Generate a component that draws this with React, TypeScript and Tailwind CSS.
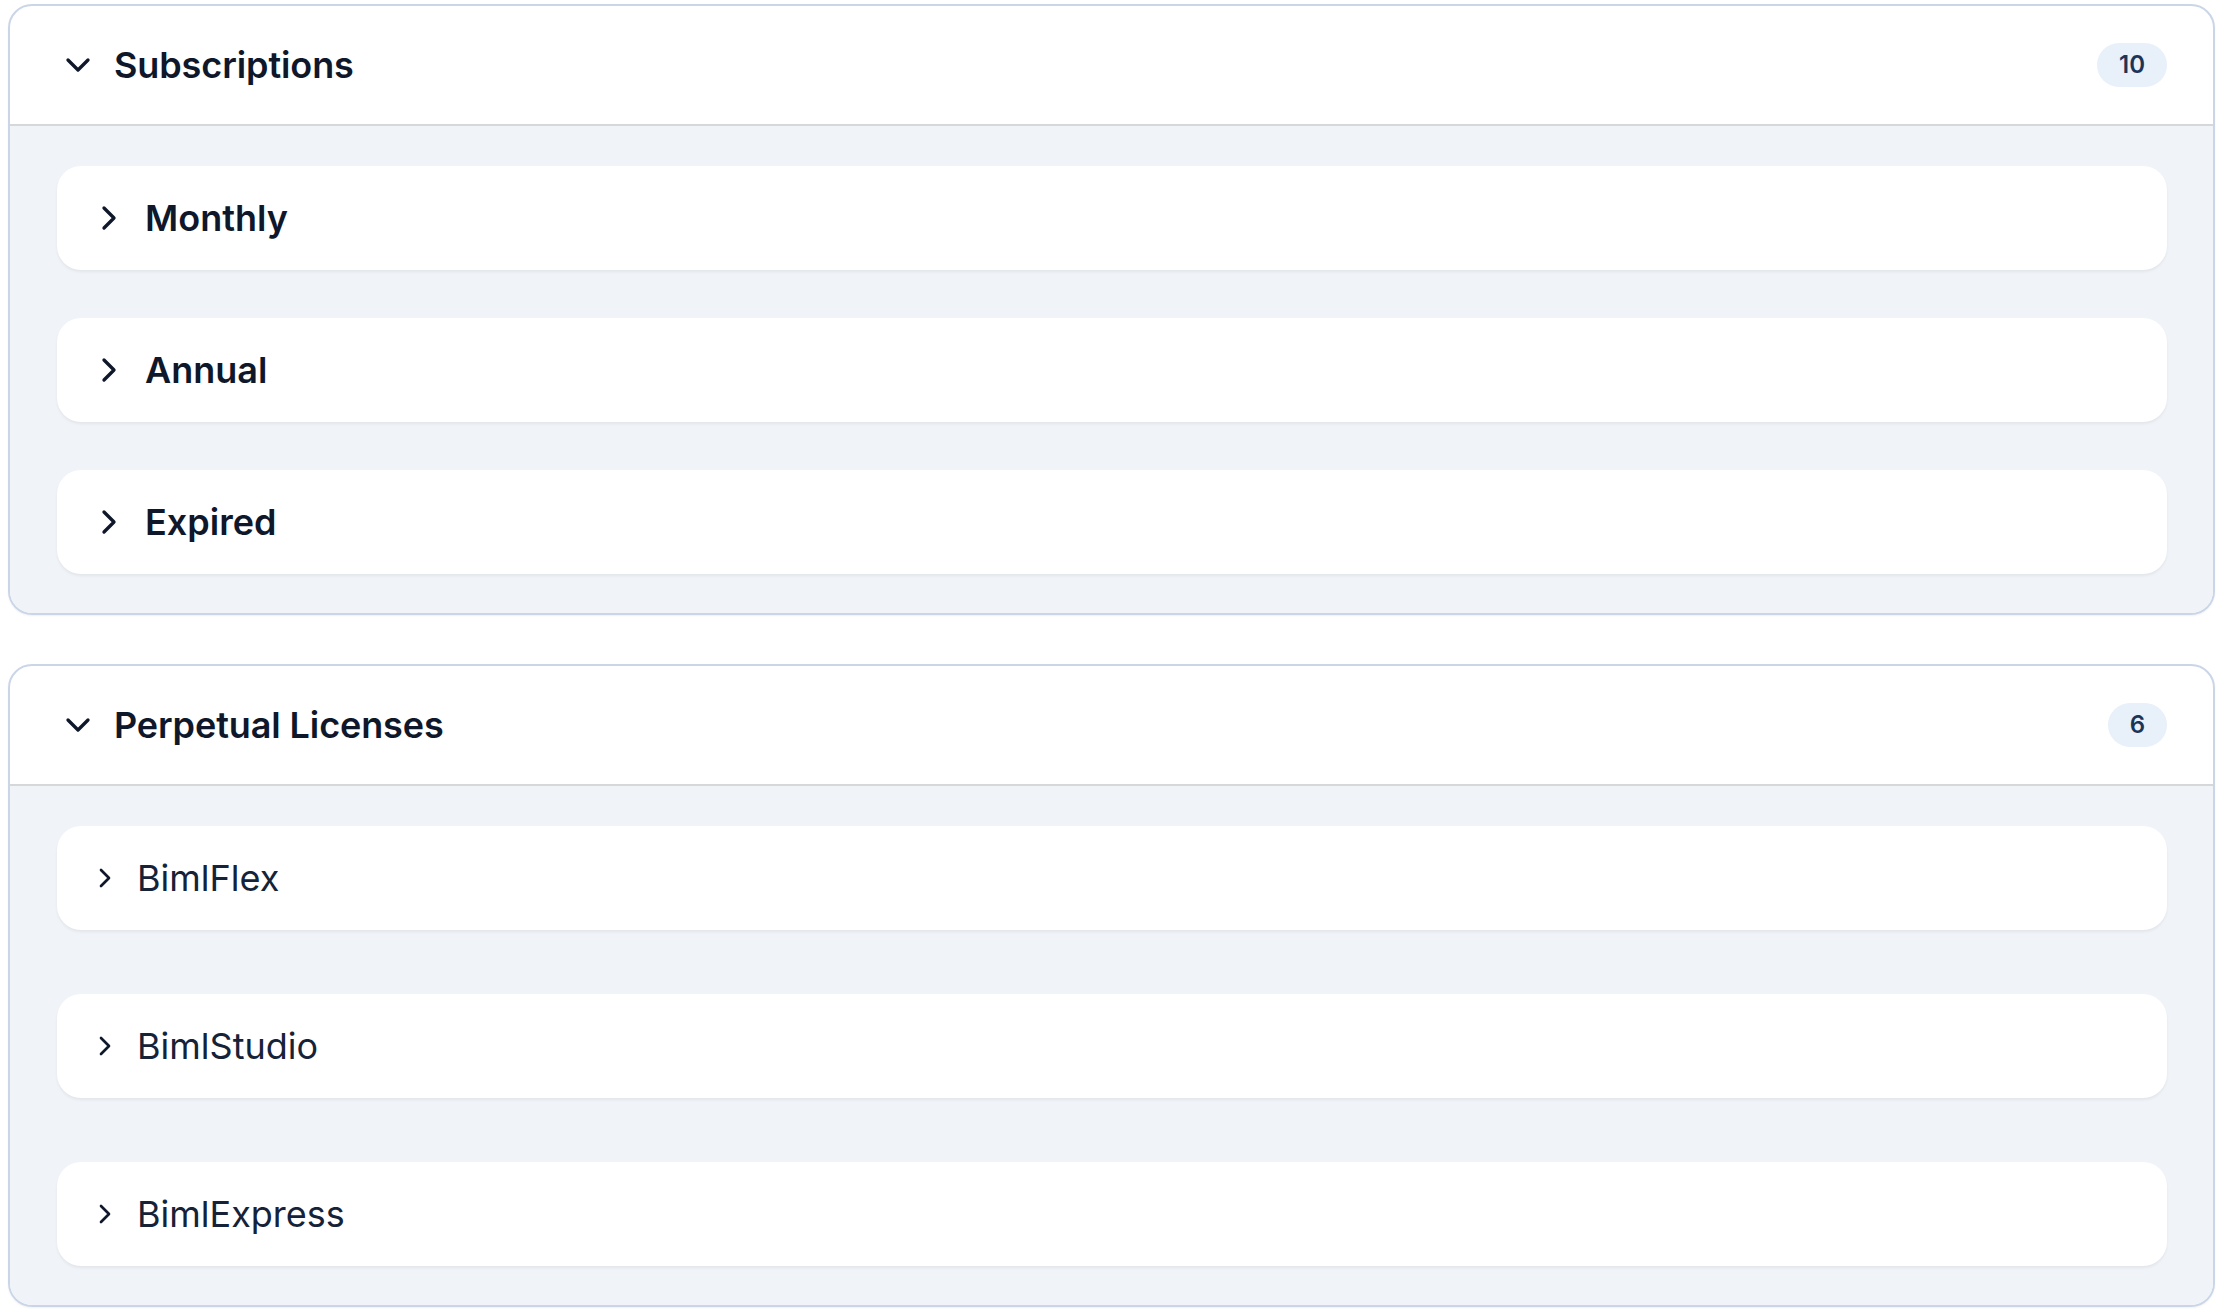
import React from "react";

const ChevronDown = ({ size }: { size: number }) => (
  <svg width={size} height={size} viewBox="0 0 24 24" fill="none" stroke="currentColor" strokeWidth={2} strokeLinecap="round" strokeLinejoin="round">
    <path d="m6 9 6 6 6-6" />
  </svg>
);

const ChevronRight = ({ size }: { size: number }) => (
  <svg width={size} height={size} viewBox="0 0 24 24" fill="none" stroke="currentColor" strokeWidth={2} strokeLinecap="round" strokeLinejoin="round">
    <path d="m9 18 6-6-6-6" />
  </svg>
);

function Section({
  title,
  count,
  items,
  bold,
}: {
  title: string;
  count: string;
  items: string[];
  bold: boolean;
}) {
  return (
    <div className="rounded-[24px] border-2 border-[#cad6e8] bg-white overflow-hidden shadow-[0_1px_2px_rgba(15,23,42,0.06)]">
      <div className="h-[120px] flex items-center justify-between pl-[48px] pr-[46px] border-b-2 border-[#d6d7d9]">
        <div className="flex items-center gap-[16px] text-[#0f172a]">
          <ChevronDown size={40} />
          <span className="text-[36px] font-semibold leading-none tracking-[-0.1px]">{title}</span>
        </div>
        <span className="rounded-full bg-[#e8f0fa] text-[#1b3558] text-[24px] font-semibold leading-[32px] py-[6px] px-[22px]">
          {count}
        </span>
      </div>
      <div className={"bg-[#f0f3f7] pt-[40px] pb-[39px] pl-[47px] pr-[46px] flex flex-col " + (bold ? "gap-[48px]" : "gap-[64px]")}>
        {items.map((it) => (
          <div
            key={it}
            className="h-[104px] shrink-0 bg-white rounded-[24px] shadow-[0_2px_3px_rgba(15,23,42,0.06)] flex items-center pl-[32px] gap-[16px] text-[#0f172a]"
          >
            {bold ? (
              <>
                <ChevronRight size={40} />
                <span className="text-[36px] font-semibold leading-none">{it}</span>
              </>
            ) : (
              <>
                <ChevronRight size={32} />
                <span className="text-[36px] font-normal leading-none text-[#152238]">{it}</span>
              </>
            )}
          </div>
        ))}
      </div>
    </div>
  );
}

export default function App() {
  return (
    <div className="min-h-screen bg-white pl-[8px] pr-[9px] pt-[4px]" style={{ fontFamily: "Inter, 'Noto Sans', sans-serif" }}>
      <div className="flex flex-col gap-[49px]">
        <Section title="Subscriptions" count="10" items={["Monthly", "Annual", "Expired"]} bold />
        <Section title="Perpetual Licenses" count="6" items={["BimlFlex", "BimlStudio", "BimlExpress"]} bold={false} />
      </div>
    </div>
  );
}
